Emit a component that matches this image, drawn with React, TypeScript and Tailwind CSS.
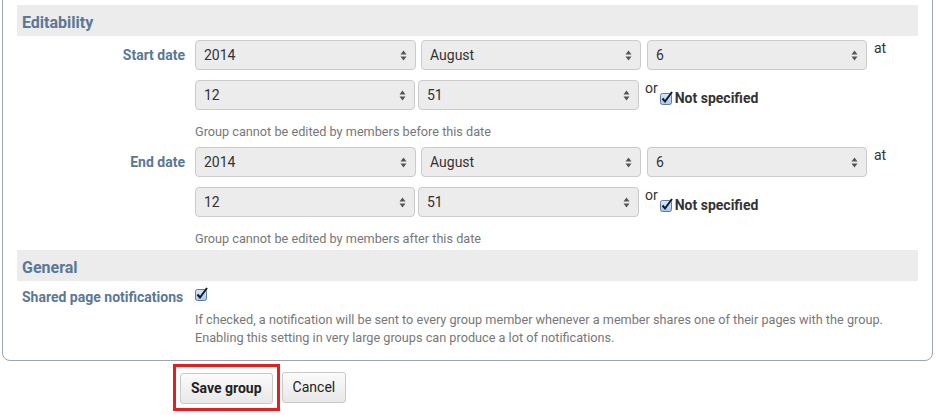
import { FC, ReactNode } from 'react';

const labelColor = 'text-[#5a7896]';

const SelectBox: FC<{ value: string; width: string }> = ({ value, width }) => (
    <div
        className={`${width} h-[30px] flex items-center justify-between pl-[8px] pr-[8px] bg-[#ececec] border border-[#cbcbcb] rounded-[4px] text-[14px] text-[#333]`}
    >
        <span>{value}</span>
        <svg width="7" height="11" viewBox="0 0 7 11">
            <path d="M3.5 0.5 L6.5 4.5 L0.5 4.5 Z" fill="#555" />
            <path d="M0.5 6.5 L6.5 6.5 L3.5 10.5 Z" fill="#555" />
        </svg>
    </div>
);

const CheckIcon: FC = () => (
    <svg width="14" height="14" viewBox="0 0 14 14" className="shrink-0">
        <defs>
            <linearGradient id="cb" x1="0" y1="0" x2="0" y2="1">
                <stop offset="0" stopColor="#dbe8f8" />
                <stop offset="1" stopColor="#a9c6ea" />
            </linearGradient>
        </defs>
        <rect x="0.5" y="2.5" width="11" height="11" rx="2" fill="url(#cb)" stroke="#5b7ca3" />
        <path d="M2.5 7.5 L5 10.5 L12 1" fill="none" stroke="#111827" strokeWidth="2" />
    </svg>
);

const DateRow: FC<{ label: string; help: string }> = ({ label, help }) => (
    <div className="flex pt-[4px]">
        <div className={`w-[178px] pr-[10px] text-right font-bold text-[14px] leading-[30px] ${labelColor}`}>
            {label}
        </div>
        <div className="flex flex-col">
            <div className="flex items-start h-[30px]">
                <SelectBox value="2014" width="w-[221px]" />
                <div className="w-[5px]" />
                <SelectBox value="August" width="w-[220px]" />
                <div className="w-[6px]" />
                <SelectBox value="6" width="w-[220px]" />
                <span className="ml-[7px] text-[14px] text-[#333] leading-[16px]">at</span>
            </div>
            <div className="flex items-start mt-[10px] h-[30px]">
                <SelectBox value="12" width="w-[220px]" />
                <div className="w-[3px]" />
                <SelectBox value="51" width="w-[221px]" />
                <span className="ml-[6px] text-[14px] text-[#333] leading-[16px]">or</span>
                <div className="flex items-center mt-[10px] ml-[2px]">
                    <CheckIcon />
                    <span className="ml-[1px] font-bold text-[14px] leading-[16px] text-[#333]">Not specified</span>
                </div>
            </div>
            <div className="mt-[14px] text-[12.7px] text-[#777] leading-[16px]">{help}</div>
        </div>
    </div>
);

const SectionHeader: FC<{ children: ReactNode }> = ({ children }) => (
    <div className={`h-[31px] bg-[#ececec] pl-[5px] pt-[5px] flex items-center font-bold text-[16px] ${labelColor}`}>
        {children}
    </div>
);

export default function App() {
    return (
        <div className="w-[938px] h-[415px] bg-white overflow-hidden font-['Roboto',sans-serif]">
            <div className="ml-[2px] w-[931px] -mt-[10px] border border-[#9aa6b2] rounded-b-[8px] pt-[14px] pb-[13px] pl-[14px] pr-[14px]">
                <SectionHeader>Editability</SectionHeader>
                <DateRow label="Start date" help="Group cannot be edited by members before this date" />
                <div className="h-[3px]" />
                <DateRow label="End date" help="Group cannot be edited by members after this date" />
                <div className="h-[3px]" />
                <SectionHeader>General</SectionHeader>
                <div className="flex pt-[5px]">
                    <div className={`w-[178px] pl-[5px] font-bold text-[14px] leading-[22px] whitespace-nowrap ${labelColor}`}>
                        Shared page notifications
                    </div>
                    <div className="flex flex-col">
                        <div className="h-[22px] flex items-start pt-[1px]">
                            <CheckIcon />
                        </div>
                        <div className="mt-[3px] text-[12.7px] text-[#777] leading-[18px]">
                            <div>If checked, a notification will be sent to every group member whenever a member shares one of their pages with the group.</div>
                            <div>Enabling this setting in very large groups can produce a lot of notifications.</div>
                        </div>
                    </div>
                </div>
            </div>
            <div className="flex items-center pl-[173px] pt-[3px]">
                <div className="border-[3px] border-[#e3201f] pl-[4px] pr-[4px] pt-[6px] pb-[4px]">
                    <button className="h-[31px] px-[10px] rounded-[3px] border border-[#c9c9c9] bg-gradient-to-b from-[#fbfbfb] to-[#e8e8e8] text-[14px] font-bold text-[#222]">
                        Save group
                    </button>
                </div>
                <button className="ml-[2px] h-[31px] px-[10px] rounded-[3px] border border-[#c9c9c9] bg-gradient-to-b from-[#fbfbfb] to-[#e8e8e8] text-[14px] text-[#222]">
                    Cancel
                </button>
            </div>
        </div>
    );
}
